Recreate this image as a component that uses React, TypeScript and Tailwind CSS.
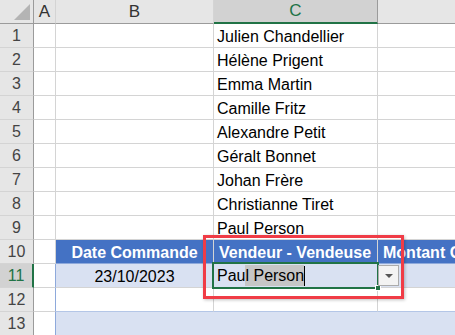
import React from 'react';

const names = [
  'Julien Chandellier',
  'Hélène Prigent',
  'Emma Martin',
  'Camille Fritz',
  'Alexandre Petit',
  'Géralt Bonnet',
  'Johan Frère',
  'Christianne Tiret',
  'Paul Person',
];

const font = { fontFamily: '"Liberation Sans", Arial, sans-serif' };

function RowHead({ n, active }: { n: number; active?: boolean }) {
  return (
    <div
      className={`h-6 flex items-center justify-center pt-[1px] text-[16px] border-b border-b-[#d4d4d4] ${
        active
          ? 'bg-[#d2d2d2] border-r-2 border-r-[#217346] text-[#217346]'
          : 'bg-[#e6e6e6] border-r border-r-[#9b9b9b] text-[#444]'
      }`}
    >
      {n}
    </div>
  );
}

function Cell({ children, className = '' }: { children?: React.ReactNode; className?: string }) {
  return (
    <div className={`h-6 border-r border-b border-[#d4d4d4] flex items-end pb-0 px-[3px] text-[16px] leading-[20px] text-black whitespace-nowrap overflow-visible ${className}`}>
      {children}
    </div>
  );
}

export default function App() {
  return (
    <div className="relative w-[455px] h-[335px] overflow-hidden bg-white" style={font}>
      <div className="grid grid-cols-[34px_22px_158px_164px_1fr]">
        {/* column headers */}
        <div className="h-6 bg-[#e6e6e6] border-r border-b border-[#9b9b9b] relative">
          <div className="absolute right-[3px] bottom-[3px] w-0 h-0 border-l-[16px] border-l-transparent border-b-[16px] border-b-[#b4b4b4]" />
        </div>
        <div className="h-6 bg-[#e6e6e6] border-r border-r-[#d4d4d4] border-b border-b-[#9b9b9b] flex items-center justify-center text-[17px] text-[#333]">A</div>
        <div className="h-6 bg-[#e6e6e6] border-r border-r-[#d4d4d4] border-b border-b-[#9b9b9b] flex items-center justify-center text-[17px] text-[#333]">B</div>
        <div className="h-6 bg-[#d2d2d2] border-r border-r-[#9b9b9b] border-b-2 border-b-[#217346] flex items-center justify-center text-[17px] text-[#217346]">C</div>
        <div className="h-6 bg-[#e6e6e6] border-b border-b-[#9b9b9b]" />

        {names.map((name, i) => (
          <React.Fragment key={name}>
            <RowHead n={i + 1} />
            <Cell />
            <Cell />
            <Cell>{name}</Cell>
            <Cell className="border-r-0" />
          </React.Fragment>
        ))}

        {/* row 10: table header */}
        <RowHead n={10} />
        <Cell />
        <Cell className="bg-[#4472c4] border-[#4472c4] border-b-[#8ea9db] justify-center font-bold text-white">Date Commande</Cell>
        <Cell className="bg-[#4472c4] border-[#4472c4] border-b-[#8ea9db] font-bold text-white pl-[5px]">Vendeur - Vendeuse</Cell>
        <Cell className="bg-[#4472c4] border-[#4472c4] border-b-[#8ea9db] border-r-0 font-bold text-white pl-[5px] overflow-hidden">Montant C</Cell>

        {/* row 11 */}
        <RowHead n={11} active />
        <Cell className="border-r-[#8ea9db]" />
        <Cell className="bg-[#d9e1f2] border-[#b4c6e7] justify-center">23/10/2023</Cell>
        <Cell className="bg-[#d9e1f2] border-[#b4c6e7]" />
        <Cell className="bg-[#d9e1f2] border-[#b4c6e7] border-r-0" />

        {/* row 12 */}
        <RowHead n={12} />
        <Cell className="border-r-[#8ea9db]" />
        <Cell className="border-b-[#b4c6e7]" />
        <Cell className="border-b-[#b4c6e7]" />
        <Cell className="border-r-0 border-b-[#b4c6e7]" />

        {/* row 13 */}
        <RowHead n={13} />
        <Cell className="border-r-[#8ea9db]" />
        <Cell className="bg-[#d9e1f2] border-[#d9e1f2]" />
        <Cell className="bg-[#d9e1f2] border-[#d9e1f2]" />
        <Cell className="bg-[#d9e1f2] border-[#d9e1f2] border-r-0" />
      </div>

      {/* active cell in edit mode */}
      <div className="absolute left-[212px] top-[262px] w-[167px] h-[27px] border-2 border-[#217346] bg-[#d9e1f2] flex items-end pb-[1px] pl-[3px] text-[16px] leading-[20px] text-black whitespace-nowrap">
        <span>Pau</span>
        <span className="bg-[#c6c6c6] h-[21px] flex items-end">l Person</span>
        <span className="w-px h-[20px] bg-black" />
        <div className="absolute right-[-4px] bottom-[-4px] w-[6px] h-[6px] bg-[#217346] border border-white" />
      </div>

      {/* dropdown button */}
      <div className="absolute left-[378px] top-[265px] w-[21px] h-[21px] bg-[#f3f3f3] border border-[#ababab] flex items-center justify-center">
        <div className="w-0 h-0 border-l-[4px] border-r-[4px] border-t-[4px] border-l-transparent border-r-transparent border-t-[#555]" />
      </div>

      {/* red highlight box */}
      <div className="absolute left-[203px] top-[235px] w-[201px] h-[64px] border-[3px] border-[#f03c46] shadow-[1px_1px_3px_rgba(0,0,0,0.25)]" />
    </div>
  );
}
